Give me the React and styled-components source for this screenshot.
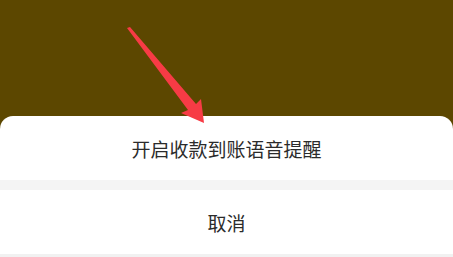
import React from 'react';
import styled, { createGlobalStyle } from 'styled-components';

const GlobalStyle = createGlobalStyle`
  html, body {
    margin: 0;
    padding: 0;
    height: 100%;
  }
  #root {
    height: 100%;
  }
`;

function App() {
  return (
    <Screen>
      <GlobalStyle />
      <Mask />
      <Sheet>
        <ActionItem>开启收款到账语音提醒</ActionItem>
        <Divider />
        <ActionItem>取消</ActionItem>
        <SafeArea />
      </Sheet>
      <Arrow viewBox="0 0 453 257" aria-hidden="true">
        <polygon
          points="127,28 130,27 196,104 201,99 204,123 181,113 188,110"
          fill="#f73b45"
        />
      </Arrow>
    </Screen>
  );
}

/////////////////////////

const Screen = styled.div`
  position: relative;
  height: 257px;
  display: flex;
  flex-direction: column;
  background: #5c4700;
  font-family: "Noto Sans CJK SC", "Noto Sans", sans-serif;
  overflow: hidden;
`;

const Mask = styled.div`
  flex: 1;
`;

const Sheet = styled.div`
  background: #ffffff;
  border-radius: 13px 13px 0 0;
  display: flex;
  flex-direction: column;
`;

const ActionItem = styled.div`
  height: 64px;
  display: flex;
  align-items: center;
  justify-content: center;
  font-size: 19px;
  color: #2b2b2b;
  letter-spacing: 0;
`;

const Divider = styled.div`
  height: 10px;
  background: #f4f4f4;
`;

const SafeArea = styled.div`
  height: 3px;
  background: #f1f1f1;
`;

const Arrow = styled.svg`
  position: absolute;
  left: 0;
  top: 0;
  width: 453px;
  height: 257px;
  pointer-events: none;
`;

export default App;
